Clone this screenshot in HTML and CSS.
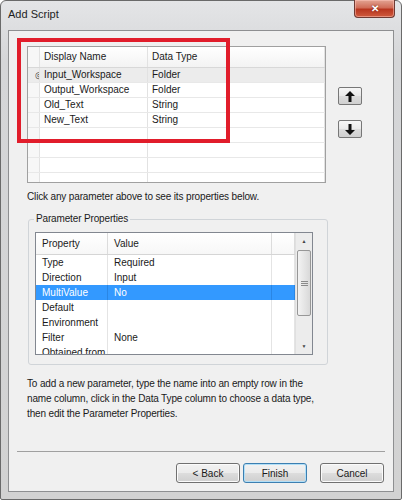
FILE: index.html
```html
<!DOCTYPE html>
<html lang="en">
<head>
    <meta charset="UTF-8">
    <title>Add Script</title>
    <link rel="stylesheet" href="styles.css">
</head>
<body>
<div class="window">
    <div class="titlebar">
        <span class="title">Add Script</span>
        <button class="close-btn">&#x2715;</button>
    </div>

    <div class="client">
        <div class="top-row">
            <div class="params">
                <div class="params-row head">
                    <span class="rh"></span><span class="cell">Display Name</span><span class="cell">Data Type</span>
                </div>
                <div class="params-row current">
                    <span class="rh"><i class="marker">&#x25CE;</i></span><span class="cell">Input_Workspace</span><span class="cell">Folder</span>
                </div>
                <div class="params-row">
                    <span class="rh"></span><span class="cell">Output_Workspace</span><span class="cell">Folder</span>
                </div>
                <div class="params-row">
                    <span class="rh"></span><span class="cell">Old_Text</span><span class="cell">String</span>
                </div>
                <div class="params-row">
                    <span class="rh"></span><span class="cell">New_Text</span><span class="cell">String</span>
                </div>
                <div class="params-row"><span class="rh"></span><span class="cell"></span><span class="cell"></span></div>
                <div class="params-row"><span class="rh"></span><span class="cell"></span><span class="cell"></span></div>
                <div class="params-row"><span class="rh"></span><span class="cell"></span><span class="cell"></span></div>
                <div class="params-row"><span class="rh"></span><span class="cell"></span><span class="cell"></span></div>
            </div>

            <div class="move-buttons">
                <button class="arrow-btn">
                    <svg width="10" height="11" viewBox="0 0 10 11"><path d="M5 0 L10 5 L6.5 5 L6.5 11 L3.5 11 L3.5 5 L0 5 Z" fill="#111"/></svg>
                </button>
                <button class="arrow-btn">
                    <svg width="10" height="11" viewBox="0 0 10 11"><path d="M5 11 L10 6 L6.5 6 L6.5 0 L3.5 0 L3.5 6 L0 6 Z" fill="#111"/></svg>
                </button>
            </div>

            <!-- annotation drawn over the list -->
            <div class="highlight-box"></div>
        </div>

        <p class="hint">Click any parameter above to see its properties below.</p>

        <fieldset class="group">
            <legend>Parameter Properties</legend>
            <div class="props">
                <div class="props-table">
                    <div class="props-row head"><span>Property</span><span>Value</span><span></span></div>
                    <div class="props-row"><span>Type</span><span>Required</span><span></span></div>
                    <div class="props-row"><span>Direction</span><span>Input</span><span></span></div>
                    <div class="props-row selected"><span>MultiValue</span><span>No</span><span></span></div>
                    <div class="props-row"><span>Default</span><span></span><span></span></div>
                    <div class="props-row"><span>Environment</span><span></span><span></span></div>
                    <div class="props-row"><span>Filter</span><span>None</span><span></span></div>
                    <div class="props-row"><span>Obtained from</span><span></span><span></span></div>
                </div>
                <div class="scrollbar">
                    <div class="sb-arrow">&#x25B2;</div>
                    <div class="sb-track">
                        <div class="sb-thumb"><span class="grip"></span></div>
                    </div>
                    <div class="sb-arrow">&#x25BC;</div>
                </div>
            </div>
        </fieldset>

        <p class="info">To add a new parameter, type the name into an empty row in the name column, click in the Data Type column to choose a data type, then edit the Parameter Properties.</p>

        <div class="separator"></div>

        <div class="footer">
            <button class="btn">&lt; Back</button>
            <button class="btn default">Finish</button>
            <button class="btn cancel">Cancel</button>
        </div>
    </div>
</div>
</body>
</html>
```

FILE: styles.css
```css
* {
    margin: 0;
    padding: 0;
    box-sizing: border-box;
}

body {
    font-family: 'Liberation Sans', Arial, sans-serif;
    font-size: 10px;
    color: #1a1a1a;
    background: #ffffff;
}

/* window frame */
.window {
    width: 402px;
    height: 500px;
    border: 1px solid #6a6a6a;
    border-radius: 6px 6px 2px 2px;
    background: linear-gradient(#e4e5e7, #d5d6d8 60px, #d2d2d2);
    display: flex;
    flex-direction: column;
}

.titlebar {
    height: 29px;
    display: flex;
    align-items: flex-start;
    justify-content: space-between;
    padding-left: 7px;
}

.title {
    font-size: 11px;
    line-height: 27px;
    color: #1e1e1e;
}

.close-btn {
    width: 41px;
    height: 18px;
    margin-top: -1px;
    margin-right: 6px;
    border: 1px solid #6e3a33;
    border-top: none;
    border-radius: 0 0 4px 4px;
    background: linear-gradient(#e2a493, #d06d58 45%, #b8361f 55%, #cf5a3d);
    color: #ffffff;
    font-size: 10px;
    font-weight: bold;
    line-height: 16px;
    text-shadow: 0 0 2px #6b1b10;
    box-shadow: inset 0 0 0 1px rgba(255, 200, 190, 0.5);
}

.client {
    flex: 1;
    margin: 0 7px 7px 7px;
    border: 1px solid #8e8f91;
    background: #f0f0f0;
    display: flex;
    flex-direction: column;
}

/* parameter list */
.top-row {
    position: relative;
    display: flex;
    margin: 15px 0 0 18px;
}

.params {
    width: 299px;
    height: 137px;
    border: 1px solid #a0a0a0;
    background: #ffffff;
    overflow: hidden;
}

.params-row {
    display: grid;
    grid-template-columns: 12px 108px 1fr;
    height: 15px;
    border-bottom: 1px solid #e8e8e8;
    line-height: 14px;
}

.params-row.head {
    height: 21px;
    line-height: 20px;
    background: linear-gradient(#ffffff, #f3f3f3);
    border-bottom: 1px solid #d8d8d8;
}

.params-row.current {
    background: #ececec;
}

.params-row .rh,
.params-row .cell {
    border-right: 1px solid #e2e2e2;
    padding-left: 4px;
    white-space: nowrap;
    overflow: hidden;
}

.params-row .rh {
    padding-left: 0;
    display: flex;
    justify-content: flex-end;
    background: #f7f7f7;
}

.params-row.current .rh {
    background: #ececec;
}

.marker {
    font-style: normal;
    font-size: 9px;
    margin-right: -4px;
    color: #333;
}

.move-buttons {
    display: flex;
    flex-direction: column;
    gap: 15px;
    margin: 41px 0 0 12px;
}

.arrow-btn {
    width: 24px;
    height: 18px;
    border: 1px solid #777;
    border-radius: 2px;
    background: linear-gradient(#f6f6f6, #e9e9e9 50%, #dcdcdc 51%, #d0d0d0);
    display: flex;
    align-items: center;
    justify-content: center;
}

.highlight-box {
    position: absolute;
    left: -10px;
    top: -8px;
    width: 213px;
    height: 105px;
    border: 4px solid #e11d2b;
    pointer-events: none;
}

.hint {
    margin: 7px 0 0 18px;
    line-height: 14px;
    letter-spacing: -0.15px;
}

/* group box */
.group {
    width: 300px;
    margin: 8px 0 0 19px;
    padding: 6px 0 9px 6px;
    border: 1px solid #d0d4d8;
    border-radius: 3px;
}

.group legend {
    margin-left: -1px;
    padding: 0 2px;
    line-height: 14px;
    letter-spacing: -0.15px;
}

.props {
    width: 278px;
    height: 123px;
    border: 1px solid #828790;
    background: #ffffff;
    display: flex;
    overflow: hidden;
}

.props-table {
    flex: 1;
}

.props-row {
    display: grid;
    grid-template-columns: 72px 164px 1fr;
    height: 15px;
    line-height: 15px;
}

.props-row span {
    border-right: 1px solid #e4e4e4;
    padding-left: 6px;
    white-space: nowrap;
    overflow: hidden;
}

.props-row.head {
    height: 22px;
    line-height: 21px;
    border-bottom: 1px solid #d5d5d5;
    background: linear-gradient(#ffffff, #f7f7f7);
}

.props-row.head span {
    border-right-color: #dcdcdc;
}

.props-row.selected {
    background: #3399ff;
    color: #ffffff;
}

.props-row.selected span {
    border-right-color: #2a86e4;
}

/* scrollbar */
.scrollbar {
    width: 17px;
    display: flex;
    flex-direction: column;
    background: #ececec;
    border-left: 1px solid #e0e0e0;
}

.sb-arrow {
    height: 16px;
    font-size: 5px;
    line-height: 16px;
    text-align: center;
    color: #444;
}

.sb-track {
    flex: 1;
    padding-top: 1px;
}

.sb-thumb {
    height: 66px;
    margin: 0 1px;
    border: 1px solid #979797;
    border-radius: 2px;
    background: linear-gradient(90deg, #f3f3f3, #e6e6e6 50%, #d9d9d9);
    display: flex;
    align-items: center;
    justify-content: center;
}

.grip {
    width: 7px;
    height: 5px;
    border-top: 1px solid #8a8a8a;
    border-bottom: 1px solid #8a8a8a;
    position: relative;
}

.grip::after {
    content: "";
    display: block;
    margin-top: 1px;
    border-top: 1px solid #8a8a8a;
}

.info {
    margin: 11px 0 0 18px;
    line-height: 15px;
    letter-spacing: -0.15px;
    width: 300px;
}

.separator {
    margin: 30px 8px 0 8px;
    height: 1px;
    background: #a0a0a0;
}

/* dialog buttons */
.footer {
    display: flex;
    justify-content: flex-end;
    margin: 11px 9px 0 0;
}

.btn {
    font-family: inherit;
    font-size: 10px;
    color: #1a1a1a;
    width: 64px;
    height: 20px;
    border: 1px solid #707070;
    border-radius: 3px;
    background: linear-gradient(#f2f2f2, #ebebeb 50%, #dddddd 51%, #cfcfcf);
    box-shadow: inset 0 0 0 1px #fbfbfb;
}

.btn + .btn {
    margin-left: 3px;
}

.btn.default {
    border-color: #3c7fb1;
    box-shadow: inset 0 0 0 1px #b2dff7;
}

.btn.cancel {
    margin-left: 13px;
}
```
